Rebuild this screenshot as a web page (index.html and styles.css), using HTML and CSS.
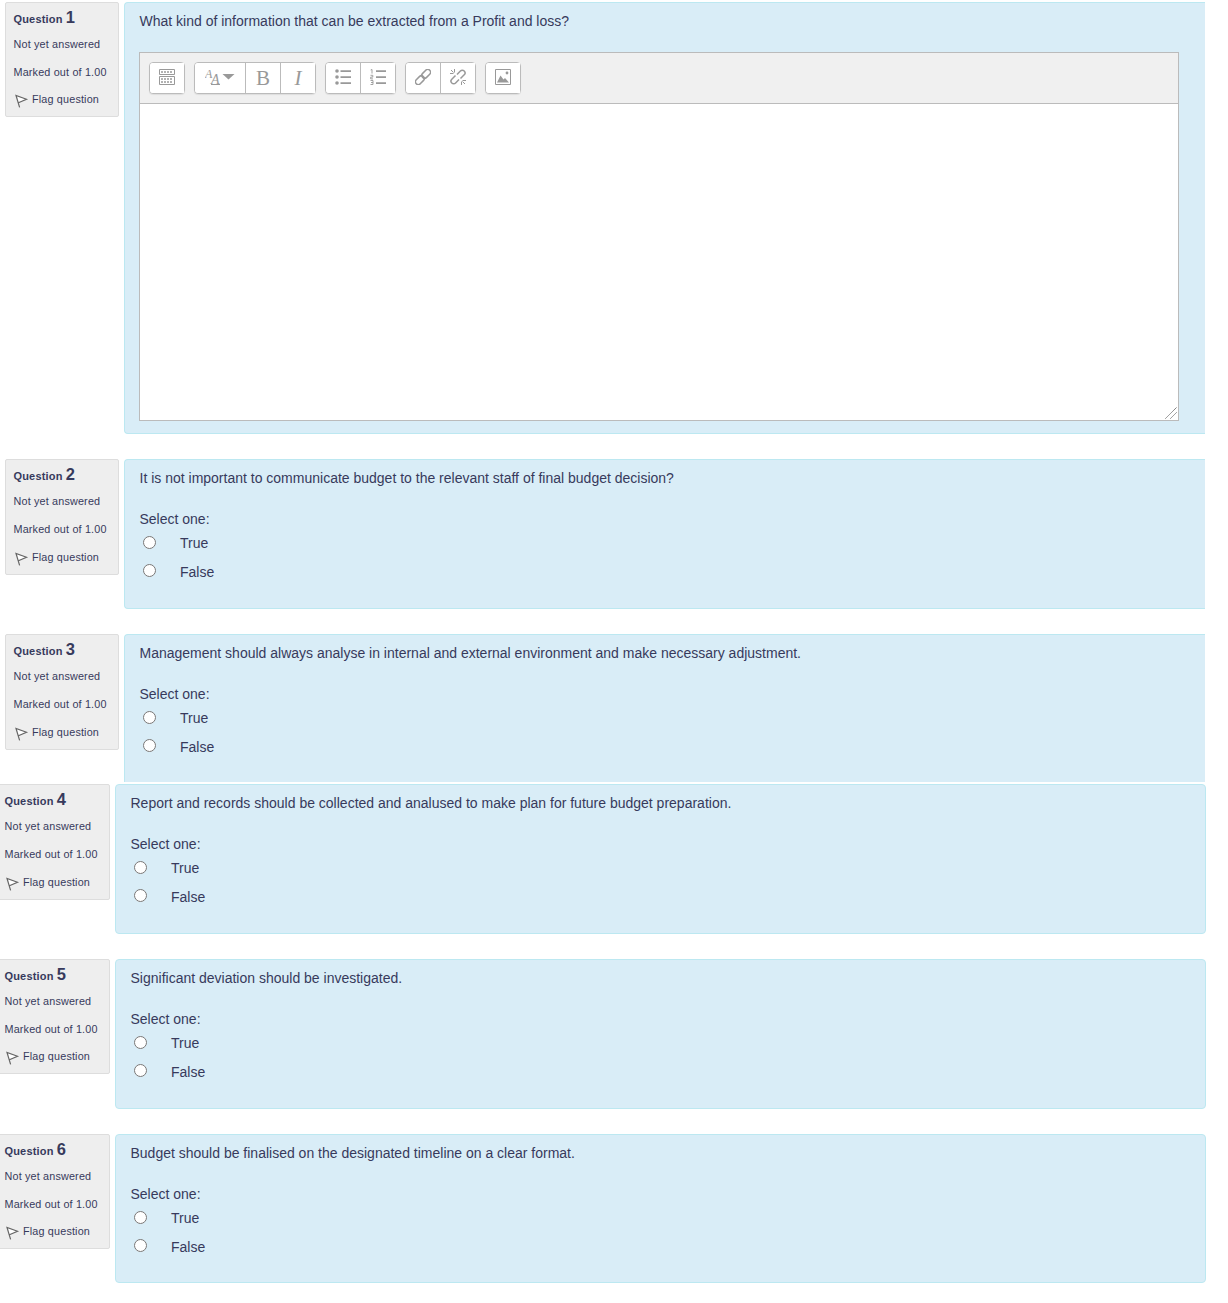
FILE: index.html
```html
<!DOCTYPE html>
<html lang="en">
<head>
<meta charset="utf-8">
<title>Quiz</title>
<link rel="stylesheet" href="styles.css">
</head>
<body>
<svg class="defs" width="0" height="0" aria-hidden="true">
  <symbol id="flag" viewBox="0 0 14 14">
    <path d="M2.400 2.400 10.800 5.300 3.600 8.600Z" fill="#fff"/>
    <path d="M4.600 13.400 1 1.500 11.500 5.200 3.400 8.800" fill="none" stroke="#666" stroke-width="1.200"/>
  </symbol>
</svg>
<main class="quiz">
  <div class="group group-a">
    <section class="que q-essay">
      <div class="info">
        <h3 class="qno">Question <span>1</span></h3>
        <div class="state">Not yet answered</div>
        <div class="grade">Marked out of 1.00</div>
        <div class="flag"><svg width="14" height="14"><use href="#flag"/></svg>Flag question</div>
      </div>
      <div class="content flat">
        <p class="qtext">What kind of information that can be extracted from a Profit and loss?</p>
        <div class="editor">
          <div class="toolbar">
            <div class="btns">
              <button class="b w36" type="button" aria-label="Toolbar">
                <svg class="ic" width="16" height="16" viewBox="0 0 16 16"><g fill="none" stroke="#999"><path d="M.5.500h15v5H.500zM.5 7.500h15v8H.500z"/><path d="M2 3h12M2 10h12M2 13h12" stroke-width="1.500" stroke-dasharray="2 1"/></g></svg>
              </button>
            </div>
            <div class="btns">
              <button class="b w51" type="button" aria-label="Font size">
                <svg class="ic" width="31" height="26" viewBox="0 -5 31 26"><text x="0" y="9" class="aa s">A</text><text x="6" y="15" class="aa">A</text><path d="M6 15.500h9" stroke="#999"/><path d="M17.500 5h12l-6 5.500z" fill="#999"/></svg>
              </button>
              <button class="b w36 bold-b" type="button">B</button>
              <button class="b w35 ital-b" type="button">I</button>
            </div>
            <div class="btns">
              <button class="b w35" type="button" aria-label="Bullets">
                <svg class="ic" width="16" height="16" viewBox="0 0 16 16"><g fill="#999"><circle cx="2" cy="2" r="1.800"/><circle cx="2" cy="8" r="1.800"/><circle cx="2" cy="14" r="1.800"/><path d="M5.500 1.200H16v1.700H5.500zM5.500 7.200H16v1.700H5.500zM5.500 13.200H16v1.700H5.500z"/></g></svg>
              </button>
              <button class="b w36" type="button" aria-label="Numbers">
                <svg class="ic" width="16" height="16" viewBox="0 0 16 16"><g fill="none" stroke="#999" stroke-width=".9"><path d="M.7 1 2 .5v4"/><path d="M.5 6.300h2.300v1.800H.7v1.800h2.300"/><path d="M.5 11.500h2.500v4H.5M1 13.500h2"/></g><path d="M6 1.200h10v1.700H6zM6 7.200h10v1.700H6zM6 13.200h10v1.700H6z" fill="#999"/></svg>
              </button>
            </div>
            <div class="btns">
              <button class="b w35" type="button" aria-label="Link">
                <svg class="ic" width="16" height="16" viewBox="0 0 16 16"><g fill="none" stroke="#999" stroke-width="1.500" transform="rotate(-45 8 8)"><rect x="-1.500" y="5.200" width="10" height="5.600" rx="2.800"/><rect x="7.500" y="5.200" width="10" height="5.600" rx="2.800"/></g></svg>
              </button>
              <button class="b w36" type="button" aria-label="Unlink">
                <svg class="ic" width="16" height="16" viewBox="0 0 16 16"><g fill="none" stroke="#999" stroke-width="1.500"><path d="M5.500 6.500 1.800 10.200a2.500 2.500 0 0 0 3.800 3.800L9 10.500"/><path d="M10.500 9.500l3.700-3.700a2.500 2.500 0 0 0-3.800-3.800L7 5.500"/></g><path d="M4.500 0v3.500M0 4.500h3.500M1 1l2.500 2.500M11.500 12.500V16M12.500 11.500H16M12.500 12.500 15 15" fill="none" stroke="#999"/></svg>
              </button>
            </div>
            <div class="btns">
              <button class="b w36" type="button" aria-label="Image">
                <svg class="ic" width="16" height="16" viewBox="0 0 16 16"><path d="M.5.500h15v15H.500z" fill="#fff" stroke="#999"/><path d="M2 13.500 5.500 6.500l3 4 1.500-1.500 4 4.500z" fill="#999"/><circle cx="12" cy="4" r="1.400" fill="#999"/></svg>
              </button>
            </div>
          </div>
          <div class="area" role="textbox" aria-label="Answer">
            <svg class="grip" width="12" height="12" viewBox="0 0 12 12"><path d="M.5 11.500 11.500.5M5.500 11.500l6-6" stroke="#555" stroke-dasharray="1 .5" fill="none"/></svg>
          </div>
        </div>
      </div>
    </section>

    <section class="que tall">
      <div class="info">
        <h3 class="qno">Question <span>2</span></h3>
        <div class="state">Not yet answered</div>
        <div class="grade">Marked out of 1.00</div>
        <div class="flag"><svg width="14" height="14"><use href="#flag"/></svg>Flag question</div>
      </div>
      <div class="content flat">
        <p class="qtext">It is not important to communicate budget to the relevant staff of final budget decision?</p>
        <div class="prompt">Select one:</div>
        <label class="opt"><input type="radio" name="q2"><span>True</span></label>
        <label class="opt"><input type="radio" name="q2"><span>False</span></label>
      </div>
    </section>

    <section class="que cut tall">
      <div class="info">
        <h3 class="qno">Question <span>3</span></h3>
        <div class="state">Not yet answered</div>
        <div class="grade">Marked out of 1.00</div>
        <div class="flag"><svg width="14" height="14"><use href="#flag"/></svg>Flag question</div>
      </div>
      <div class="content flat cut-c">
        <p class="qtext">Management should always analyse in internal and external environment and make necessary adjustment.</p>
        <div class="prompt">Select one:</div>
        <label class="opt"><input type="radio" name="q3"><span>True</span></label>
        <label class="opt"><input type="radio" name="q3"><span>False</span></label>
      </div>
    </section>
  </div>

  <div class="group group-b">
    <section class="que tall">
      <div class="info">
        <h3 class="qno">Question <span>4</span></h3>
        <div class="state">Not yet answered</div>
        <div class="grade">Marked out of 1.00</div>
        <div class="flag"><svg width="14" height="14"><use href="#flag"/></svg>Flag question</div>
      </div>
      <div class="content">
        <p class="qtext">Report and records should be collected and analused to make plan for future budget preparation.</p>
        <div class="prompt">Select one:</div>
        <label class="opt"><input type="radio" name="q4"><span>True</span></label>
        <label class="opt"><input type="radio" name="q4"><span>False</span></label>
      </div>
    </section>

    <section class="que">
      <div class="info">
        <h3 class="qno">Question <span>5</span></h3>
        <div class="state">Not yet answered</div>
        <div class="grade">Marked out of 1.00</div>
        <div class="flag"><svg width="14" height="14"><use href="#flag"/></svg>Flag question</div>
      </div>
      <div class="content">
        <p class="qtext">Significant deviation should be investigated.</p>
        <div class="prompt">Select one:</div>
        <label class="opt"><input type="radio" name="q5"><span>True</span></label>
        <label class="opt"><input type="radio" name="q5"><span>False</span></label>
      </div>
    </section>

    <section class="que last">
      <div class="info">
        <h3 class="qno">Question <span>6</span></h3>
        <div class="state">Not yet answered</div>
        <div class="grade">Marked out of 1.00</div>
        <div class="flag"><svg width="14" height="14"><use href="#flag"/></svg>Flag question</div>
      </div>
      <div class="content short">
        <p class="qtext">Budget should be finalised on the designated timeline on a clear format.</p>
        <div class="prompt">Select one:</div>
        <label class="opt"><input type="radio" name="q6"><span>True</span></label>
        <label class="opt"><input type="radio" name="q6"><span>False</span></label>
      </div>
    </section>
  </div>
</main>
</body>
</html>
```
FILE: styles.css
```css
* { box-sizing: border-box; }
html, body { margin: 0; padding: 0; background: #fff; }
body {
  font-family: "Liberation Sans", Arial, sans-serif;
  font-size: 14px;
  color: #373a5c;
  overflow-x: hidden;
}
.defs { position: absolute; }
.quiz { padding-top: 2px; }
.group-a { margin-left: 5px; width: 1200px; }
.group-b { margin-left: -4px; width: 1210px; margin-top: 2px; }
.que { display: flex; gap: 5px; align-items: flex-start; margin-bottom: 25px; }
.que.cut { margin-bottom: 0; }
.info {
  flex: 0 0 114px;
  height: 115px;
  background: #eeeeee;
  border: 1px solid #dddddd;
  border-radius: 2px;
  padding: 5px 0 0 7.500px;
  font-size: 10.8px;
  letter-spacing: 0.17px;
  color: #373a5c;
}
.tall .info { height: 116px; }
.qno { margin: 0; height: 18px; font-size: 11px; font-weight: 700; line-height: 18px; }
.qno span { font-size: 16.500px; font-weight: 700; }
.state { margin-top: 10px; height: 16px; line-height: 16px; }
.grade { margin-top: 12px; height: 16px; line-height: 16px; }
.flag { margin-top: 11px; height: 16px; line-height: 16px; display: flex; align-items: center; gap: 3px; margin-left: 1.500px; }
.tall .flag { margin-top: 12px; }
.flag svg { flex: none; margin-top: 3px; }
.content {
  flex: 1 1 auto;
  height: 150px;
  background: #d9edf7;
  border: 1px solid #bce8f1;
  border-radius: 4px;
  padding: 10px 14px 0 14.500px;
}
.flat { border-top-right-radius: 0; border-bottom-right-radius: 0; border-right: 0; }
.cut-c { height: 148px; border-bottom: 0; border-bottom-left-radius: 0; }
.short { height: 149px; }
.q-essay .content { height: 432px; }
.qtext { margin: 0; height: 16px; line-height: 16px; }
.prompt { margin-top: 25px; height: 16px; line-height: 16px; margin-bottom: 2px; }
.opt { display: flex; align-items: center; height: 28.500px; }
.opt input { margin: 0 0 2px 3.500px; width: 13px; height: 13px; flex: none; }
.opt span { margin-left: 24px; }
.editor { margin-top: 23px; margin-left: -.500px; width: 1040px; border: 1px solid #bbbbbb; }
.toolbar { height: 51px; background: #f0f0f0; border-bottom: 1px solid #bbbbbb; display: flex; gap: 9px; padding: 9px 0 0 9px; }
.btns { display: flex; height: 32px; background: #fff; border: 1px solid #bbbbbb; border-radius: 4px; box-shadow: 0 1px 1px rgba(0,0,0,.08); }
.b { display: flex; align-items: center; justify-content: center; padding: 0; margin: 0; height: 30px; background: #fff; border: 0; border-left: 1px solid #bbbbbb; color: #999; border-radius: 0; }
.b:first-child { border-left: 0; border-radius: 3px 0 0 3px; }
.ic { margin-bottom: 2px; }
.w36 { width: 35px; }
.w35 { width: 35px; }
.w51 { width: 50px; }
.btns .b:first-child.w36, .btns .b:first-child.w35 { width: 34px; }
.bold-b, .ital-b { font-family: "Liberation Serif", "Times New Roman", serif; font-size: 21px; line-height: 1; }
.ital-b { font-style: italic; }
.aa { font-family: "Liberation Serif", serif; font-style: italic; font-size: 14px; fill: #999; }
.aa.s { font-size: 12px; }
.area { position: relative; height: 316px; background: #fff; }
.grip { position: absolute; right: 1px; bottom: 1px; }
```
